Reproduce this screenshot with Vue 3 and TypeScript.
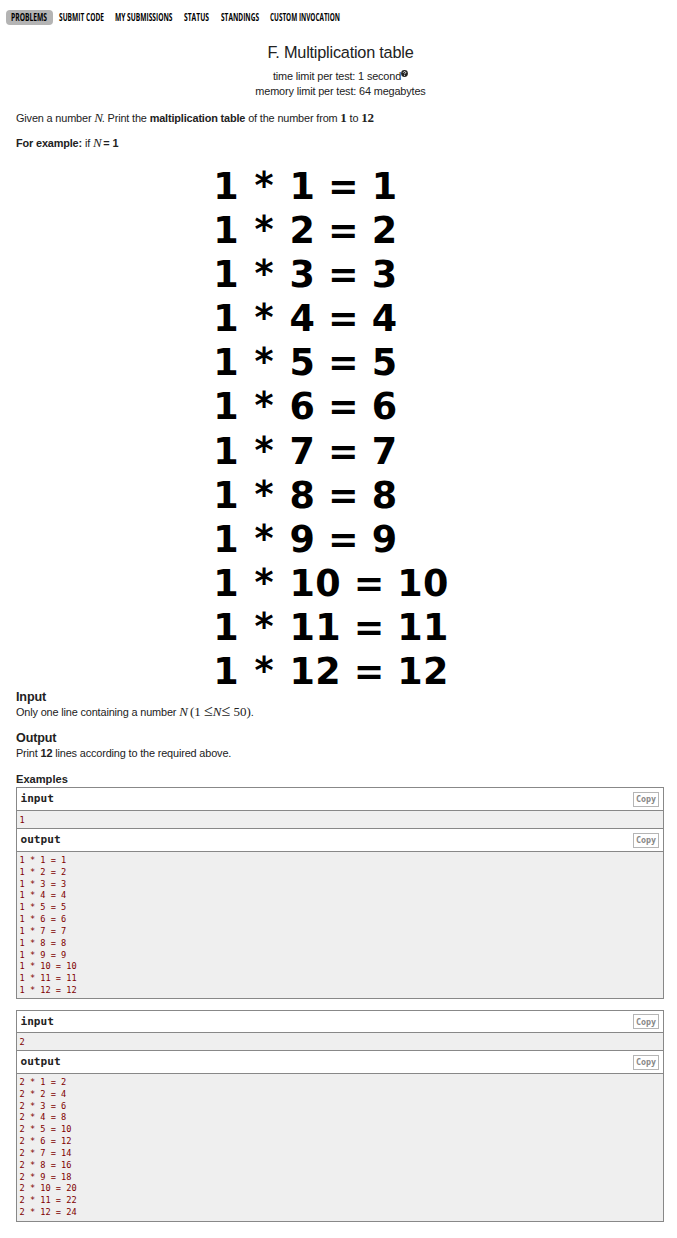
<script setup lang="ts">
interface NavItem {
  label: string
  width: number
  active?: boolean
}

const nav: NavItem[] = [
  { label: 'PROBLEMS', width: 36, active: true },
  { label: 'SUBMIT CODE', width: 45 },
  { label: 'MY SUBMISSIONS', width: 57.5 },
  { label: 'STATUS', width: 25 },
  { label: 'STANDINGS', width: 38 },
  { label: 'CUSTOM INVOCATION', width: 70 },
]

const factors: number[] = Array.from({ length: 12 }, (_, i) => i + 1)

const table = (n: number): string => factors.map((i) => `${n} * ${i} = ${n * i}`).join('\n')

const samples = [1, 2].map((n) => ({ input: String(n), output: table(n) }))
</script>

<template>
  <main class="page">
    <nav class="menu">
      <a v-for="item in nav" :key="item.label" class="menu-item" :class="{ active: item.active }">
        <svg :width="item.width" height="15" class="menu-label">
          <text x="0" y="11" :textLength="item.width" lengthAdjust="spacingAndGlyphs">{{ item.label }}</text>
        </svg>
      </a>
    </nav>

    <header class="head">
      <h1 class="title">F. Multiplication table</h1>
      <div class="limit time">
        time limit per test: 1 second<svg class="help" width="7" height="7" viewBox="0 0 7 7">
          <circle cx="3.5" cy="3.5" r="3.4" fill="#222" />
          <path d="M2.3 2.7C2.4 1.2 4.8 1.3 4.7 2.6C4.6 3.3 3.5 3.3 3.5 4.2M3.5 4.9V5.8" fill="none" stroke="#fff" stroke-width="0.9" />
        </svg>
      </div>
      <div class="limit memory">memory limit per test: 64 megabytes</div>
    </header>

    <p class="para statement">Given a number <i class="math">N</i>. Print the <b>maltiplication table</b> of the number from <b class="mathb">1</b> to <b class="mathb">12</b></p>
    <p class="para example"><b>For example:</b> if <i class="math">N</i> <b>= 1</b></p>

    <div class="figure">
      <div v-for="i in factors" :key="i" class="equation">
        <span class="num">1</span>
        <span class="star">*</span>
        <span class="num" :class="{ wide: i > 9 }">{{ i }}</span>
        <span class="equals">=</span>
        <span class="num" :class="{ wide: i > 9 }">{{ i }}</span>
      </div>
    </div>

    <section class="spec spec-input">
      <h2>Input</h2>
      <p>Only one line containing a number <span class="formula"><i>N</i><span class="open">(</span>1 <span class="rel">≤</span><i>N</i><span class="rel">≤</span> 50)</span>.</p>
    </section>
    <section class="spec spec-output">
      <h2>Output</h2>
      <p>Print <b>12</b> lines according to the required above.</p>
    </section>

    <h3 class="examples">Examples</h3>
    <div v-for="s in samples" :key="s.input" class="sample" :class="'sample-' + s.input">
      <div class="bar first"><span>input</span><button class="copy">Copy</button></div>
      <pre class="data one">{{ s.input }}</pre>
      <div class="bar second"><span>output</span><button class="copy">Copy</button></div>
      <pre class="data many">{{ s.output }}</pre>
    </div>
  </main>
</template>

<style>
body {
  margin: 0;
  background: #fff;
}
</style>

<style scoped>
.page {
  width: 677px;
  height: 1238px;
  box-sizing: border-box;
  padding: 10px 13px 0 16px;
  overflow: hidden;
  color: #222;
  font: 10.9px/15px "Liberation Sans", Arial, sans-serif;
  letter-spacing: -0.15px;
}
.menu {
  display: flex;
  height: 15px;
  margin-left: -10px;
  gap: 1px;
}
.menu-item {
  height: 15px;
  padding: 0 5.25px;
  border-radius: 4px;
}
.menu-item.active {
  background: #b4b4b4;
}
.menu-label {
  display: block;
  overflow: visible;
  font: bold 10px "Open Sans", sans-serif;
  letter-spacing: 0;
  fill: #000;
}
.head {
  height: 76px;
  padding-top: 17px;
  padding-left: 1px;
  text-align: center;
  box-sizing: border-box;
}
.title {
  margin: 0 0 7px;
  font-size: 16.3px;
  line-height: 20px;
  font-weight: normal;
  letter-spacing: -0.22px;
}
.help {
  vertical-align: 3px;
}
.para,
.spec p {
  margin: 0;
  line-height: 15px;
  white-space: nowrap;
}
.statement {
  margin-top: 10px;
}
.example {
  margin-top: 10px;
}
.math,
.mathb,
.formula {
  font-family: "Liberation Serif", serif;
  font-size: 13px;
  line-height: 1px;
}
.math {
  margin-right: -1px;
}
.formula {
  letter-spacing: 0;
}
.rel {
  font-size: 16px;
}
.open {
  margin-left: 2px;
}
.figure {
  margin: 14px 0 0 197px;
  height: 525px;
  font: bold 36.5px/44.1px "DejaVu Sans", sans-serif;
  letter-spacing: 0;
  color: #000;
}
.equation {
  display: flex;
  gap: 12.4px;
  height: 44.1px;
}
.num,
.star {
  width: 25.8px;
  text-align: center;
}
.star {
  line-height: 42px;
}
.num.wide {
  width: 51.6px;
  letter-spacing: 0.4px;
}
.equals {
  width: 31.5px;
  text-align: center;
}
.spec {
  height: 41px;
}
.spec h2 {
  margin: 0;
  font-size: 12.6px;
  line-height: 15px;
}
.examples {
  margin: 0;
  height: 15px;
  font-size: 11.1px;
  line-height: 15px;
  letter-spacing: 0;
}
.sample {
  width: 648px;
  box-sizing: border-box;
  border: 1px solid #888;
  margin-bottom: 11px;
  font-family: "DejaVu Sans Mono", monospace;
  letter-spacing: 0;
}
.bar {
  display: flex;
  justify-content: space-between;
  align-items: center;
  height: 22px;
  padding: 0 4px 0 3.5px;
  font-size: 11.1px;
  font-weight: bold;
}
.bar span {
  margin-bottom: 2px;
}
.copy {
  width: 26px;
  height: 15px;
  box-sizing: border-box;
  margin: 0;
  padding: 0;
  border: 1px solid #b5b5b5;
  background: #fff;
  color: #888;
  font: bold 8.4px/12px "DejaVu Sans Mono", monospace;
}
.data {
  margin: 0;
  padding: 3px 2.5px 0;
  box-sizing: border-box;
  border-top: 1px solid #888;
  background: #efefef;
  color: #800000;
  font: 8.65px/11.82px "DejaVu Sans Mono", monospace;
}
.one {
  height: 18px;
  padding-top: 4px;
}
.second {
  border-top: 1px solid #888;
}
.many {
  height: 147px;
}
.sample-2 .first {
  height: 21px;
}
.sample-2 .first span {
  margin-bottom: 0;
}
.sample-2 .many {
  height: 148px;
}
</style>
